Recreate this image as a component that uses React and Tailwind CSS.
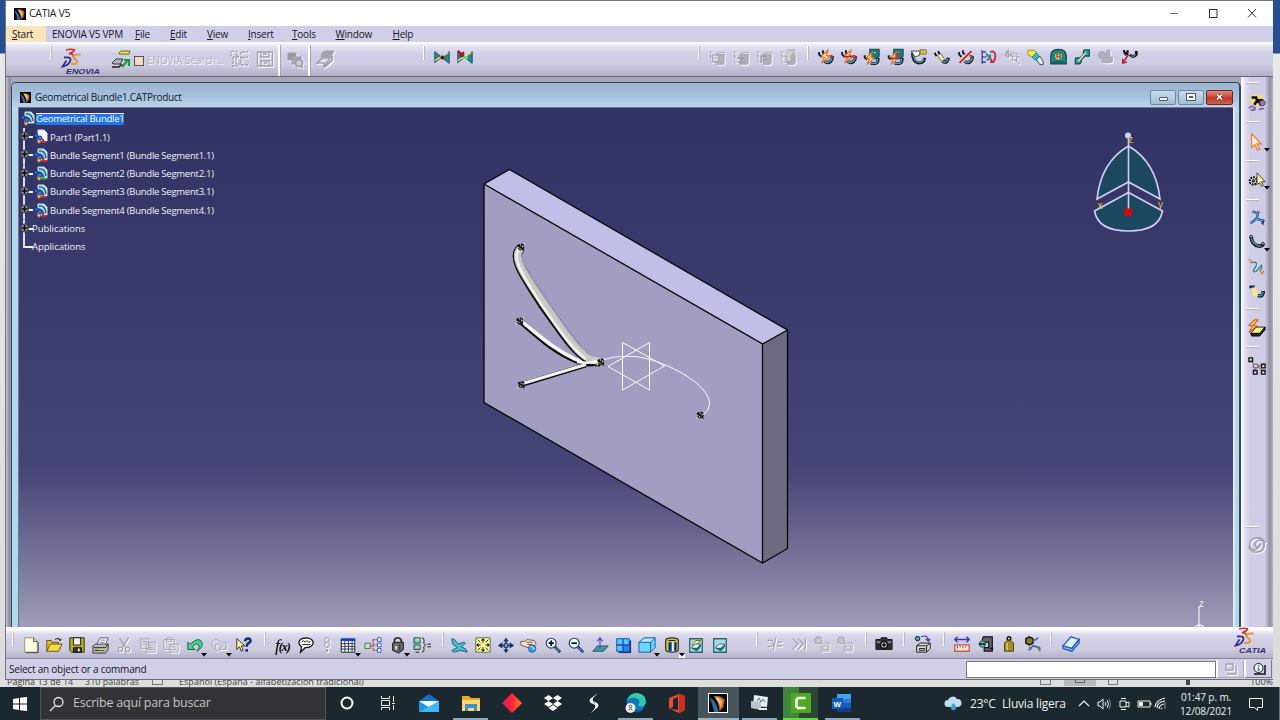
import React from 'react';

/* ---------- helpers ---------- */

const Icon = ({ w = 20, h = 20, off, children }) => (
  <svg
    width={w}
    height={h}
    viewBox={`0 0 ${w} ${h}`}
    fill="none"
    stroke={off ? '#a09faf' : '#111'}
    className={off ? 'shrink-0 drop-shadow-[1px_1px_0_#fff]' : 'shrink-0'}
  >
    {children}
  </svg>
);

const Cell = ({ className = 'w-[23.4px]', children }) => (
  <div className={`flex h-6 shrink-0 items-center justify-center ${className}`}>{children}</div>
);

const Grip = ({ className = '' }) => (
  <div className={`h-[14px] w-[2px] shrink-0 border-r border-[#b9b8c8] bg-[#fafaff] ${className}`} />
);

const Arrow = () => (
  <svg width="6" height="4" viewBox="0 0 6 4" className="absolute bottom-0 right-0">
    <path d="M0 0h6L3 3.5z" fill="#000" />
  </svg>
);

const AppLogo = ({ size = 12 }) => (
  <svg width={size} height={size} viewBox="0 0 12 12" className="shrink-0">
    <rect width="12" height="12" fill="#06080f" />
    <path d="M.5 2.500Q4 3 6.500 12H3.500Q2 6 .5 2.500" fill="#2b6fa3" />
    <path d="M3 1.500Q8 .500 10.500 4L9.500 9 7 11.500Q6.500 5 3 1.500" fill="#b9602a" />
    <path d="M4 2Q8 2 9 5L8 9.500Q6.500 5 4 2" fill="#f3a95c" />
    <path d="M4.500 2.500Q7.500 3.500 7.500 7Q6.500 4.500 4.500 2.500" fill="#fff6dc" />
  </svg>
);

const Solutions = ({ label }) => (
  <svg width="42" height="27" viewBox="0 0 42 27" fill="none" className="shrink-0">
    <path d="M5 2Q10 .500 13.500 1.800Q13 4 8 5.800Q13 5.500 12 9" stroke="#cc2a35" strokeWidth="1.600" />
    <path d="M3 9.500Q10 8.500 9.500 12Q8 17.500 1.500 18.500L5.500 12.500" stroke="#342c85" strokeWidth="1.800" />
    <path d="M19.500 6.500Q13 6 12.500 8.500Q12.500 10.500 15 11.500Q17.500 13.500 14.500 16H10" stroke="#e59a32" strokeWidth="2" />
    <text x="5" y="25.500" fontSize="7.500" fontStyle="italic" fontWeight="700" fontFamily="Liberation Sans, sans-serif" fill="#342c70" textLength={label === 'CATIA' ? 27 : 34} lengthAdjust="spacingAndGlyphs">{label}</text>
  </svg>
);

/* ---------- harness icons ---------- */

const Strand = () => (
  <>
    <path d="M2.500 4v3l3 3M7 2v3l2 2" stroke="#1a1a22" strokeWidth="2.200" />
    <path d="M9 15q4 3 7 0 2-2 2-6" stroke="#15151c" strokeWidth="4" />
    <path d="M9 15q4 2.500 6.500 0 2-2 2-4" stroke="#4aa0c4" strokeWidth="2" />
    <path d="M17.500 12V8.500h-3" stroke="#c23a48" strokeWidth="1.600" />
  </>
);

const Bolt = () => <path d="M13 2L5 9l4 1.500L5.500 17 15 9.500 11 8z" fill="#ffe07a" stroke="#df6a2a" strokeWidth="1.300" />;

const BoltStrand = ({ mark }) => (
  <Icon>
    <Strand />
    <Bolt />
    {mark && <path d="M4 9.500h11" stroke="#c91f2d" strokeWidth="2" />}
  </Icon>
);

const BoltHook = ({ mark }) => (
  <Icon>
    <path d="M8 1h11v8l-4 3H8z" fill="#167f80" stroke="#0c4a4c" strokeWidth="1.200" />
    <circle cx="14" cy="5" r="2" fill="#8fc9c4" stroke="#0c4a4c" />
    <path d="M2 8v3l3 2" stroke="#1a1a22" strokeWidth="2.200" />
    <path d="M9 17q5 2 8-1l1-5" stroke="#15151c" strokeWidth="3.800" />
    <path d="M9 17q5 1.500 7.500-1l1-4" stroke="#4aa0c4" strokeWidth="1.800" />
    <path d="M11 4L4 11l3.500 1L4.500 19 13 11.500 9.500 10z" fill="#ffe07a" stroke="#df6a2a" strokeWidth="1.300" />
    {mark && <path d="M4 11.500h10M12 6h4" stroke="#c91f2d" strokeWidth="2" />}
  </Icon>
);

const Flag = ({ red }) => (
  <Icon>
    <path d="M2 3l16 13V3L2 15z" fill="#28898a" stroke="#124e58" />
    <path d="M2 13L17 4" stroke="#f0e35a" strokeWidth="1.600" />
    <circle cx="10.500" cy="9.500" r="2" fill={red ? '#28e05c' : '#111'} stroke={red ? '#bff5c8' : '#c33'} />
    {red && <path d="M2 2l6 5M8 3v4.500H4" stroke="#b01228" strokeWidth="2.400" />}
  </Icon>
);

const PartOff = ({ children }) => (
  <Icon off>
    <path d="M9 6h8v11H9z" fill="#b1b0bd" />
    <path d="M9 6l3-2h6v11l-1 2" />
    <path d="M3 3v12h5M2 3h4M3 8h3" strokeDasharray="2 1" />
    {children}
  </Icon>
);

const Curve = () => (
  <Icon>
    <path d="M3.500 4Q4 13 12 14.500Q16 15 17 12" stroke="#15151c" strokeWidth="4" />
    <path d="M3.500 5Q5 12 12 14.500H15" stroke="#4f9ea8" strokeWidth="1.500" />
    <circle cx="3.500" cy="4" r="1.500" fill="#a9bcc8" stroke="#15151c" />
    <circle cx="16.500" cy="12" r="1.500" fill="#a9bcc8" stroke="#15151c" />
  </Icon>
);

const Lamp = () => (
  <Icon>
    <path d="M3 4v3M6 4v2" stroke="#15151c" strokeWidth="2.600" />
    <path d="M4 7l4-1 4 8-1 2h-4Q4 12 4 7z" fill="#f7e48b" stroke="none" />
    <path d="M11 15q6 2 6-5" stroke="#15151c" strokeWidth="4" />
    <path d="M11 15q5 1.500 5.500-4" stroke="#4c8fb5" strokeWidth="1.800" />
  </Icon>
);

/* ---------- top area ---------- */

const TitleBar = () => (
  <div className="flex h-[25px] items-center bg-white pl-2">
    <AppLogo />
    <span className="ml-[3px] text-[10.500px] leading-none tracking-[-0.3px] text-[#222]">CATIA V5</span>
    <svg width="90" height="12" viewBox="0 0 90 12" fill="none" stroke="#333" className="ml-auto mr-[16px] -mt-[2px]">
      <path d="M3 6.500h8" stroke="#777" />
      <rect x="42.500" y="2.500" width="7.500" height="8" />
      <path d="M81 2l8 8.500M89 2l-8 8.500" />
    </svg>
  </div>
);

const MENU = [
  ['S', 'tart', 'w-[40px] pl-[6px] bg-[#fbe2b8]'],
  ['', 'ENOVIA V5 VPM', 'w-[89px] pl-[6px]'],
  ['F', 'ile', 'w-[35px]'],
  ['E', 'dit', 'w-[37px]'],
  ['V', 'iew', 'w-[41px]'],
  ['I', 'nsert', 'w-[44px]'],
  ['T', 'ools', 'w-[43.500px]'],
  ['W', 'indow', 'w-[57px]'],
  ['H', 'elp', 'w-[30px]'],
];

const MenuBar = () => (
  <div className="flex h-[16px] bg-[#d1cfe7] text-[10px] leading-[16px] tracking-[-0.22px] text-[#16162a]">
    {MENU.map(([key, rest, width]) => (
      <div key={rest} className={`shrink-0 whitespace-nowrap ${width}`}>
        <span className="underline underline-offset-1">{key}</span>
        {rest}
      </div>
    ))}
  </div>
);

const TopToolbar = () => (
  <div className="flex h-[35px] items-start border-b border-[#66657a] bg-[linear-gradient(#fff_0,#e6e5f2_4px,#d0cee6_12px,#cfcde4_22px,#b2b0c4_34px)]">
    <Grip className="ml-[44px] mt-[4px]" />
    <div className="ml-[9px] mt-[6px] flex"><Solutions label="ENOVIA" /></div>
    <div className="ml-[8px] mt-[6px] flex h-6 items-center">
      <Icon>
        <path d="M8 3l2-2h9l-1 3H8z" fill="#f5e83c" stroke="#6b6a20" />
        <path d="M1 13l4-4h7l-3 5H3z" fill="#b4b3bf" stroke="#333" />
        <path d="M1 17h7l3-3" stroke="#222" strokeWidth="1.600" />
        <path d="M11 17l6-7m-4 0h5v6" stroke="#199b35" strokeWidth="2.200" />
      </Icon>
      <div className="ml-[3px] mt-[2px] h-[10px] w-[10px] border border-[#555] bg-[#f5d9c8]" />
      <span className="ml-[3px] w-[77px] whitespace-nowrap text-[10px] tracking-[-0.08px] text-[#b3b1c1] [text-shadow:1px_1px_0_#fff]">ENOVIA Search...</span>
    </div>
    <div className="mt-[5px] flex">
      <Cell className="w-[29px]">
        <Icon off>
          <path d="M2 3l3-1 3 1v4l-3 1-3-1zM4 8v9h5M7 8h5v7H7zM13 3h6M13 9l6-1M12 16h7M12 3v6" strokeWidth="1.300" strokeDasharray="3 1" />
        </Icon>
      </Cell>
      <Cell className="w-[23px]">
        <Icon off>
          <path d="M2.500 3h15v14h-15zM6 3v5h8V3M6 17v-5h8v5M8 5h4M9 14h3" strokeWidth="1.300" />
        </Icon>
      </Cell>
    </div>
    <div className="ml-[2px] mt-[3px] h-[31px] w-[3px] border-r border-[#a5a4b5] bg-white" />
    <Cell className="mt-[6px] w-[27px]">
      <Icon off>
        <path d="M3 3h8v7H3z" fill="#9897a3" />
        <path d="M7 7h9v7H7z" fill="#a3a2ae" />
        <circle cx="14" cy="13" r="3.500" strokeWidth="2" fill="#cfcde4" />
        <path d="M16 16l2 2" strokeWidth="2" />
      </Icon>
    </Cell>
    <div className="mt-[3px] h-[31px] w-[3px] border-r border-[#a5a4b5] bg-white" />
    <Cell className="mt-[6px] w-[27px]">
      <Icon off>
        <path d="M7 3l3-2h9l-3 6H6z" fill="#a3a2ae" />
        <path d="M2 13l5-5h8l-6 9v-4z" fill="#dedde9" strokeWidth="1.600" />
        <path d="M10 17l7-7V6" strokeWidth="2" />
      </Icon>
    </Cell>
    <Grip className="ml-[85px] mt-[4px]" />
    <div className="ml-[5px] mt-[4px] flex [&_svg]:w-[18px]">
      <Cell><Flag /></Cell>
      <Cell><Flag red /></Cell>
    </div>
    <Grip className="ml-[221px] mt-[4px]" />
    <div className="ml-[6px] mt-[4px] flex [&_svg]:w-[18px]">
      <Cell><PartOff><path d="M5 7h7v7H5zM7 10h4" fill="#ddd" /></PartOff></Cell>
      <Cell><PartOff><path d="M6 10h6l-3 5h5" strokeWidth="2" /></PartOff></Cell>
      <Cell><PartOff><path d="M7 15V8h6m-4 4h5" strokeWidth="2" /></PartOff></Cell>
      <Cell><PartOff><path d="M9 1h9l-4 6v7H8V8H5" fill="#ccc" /></PartOff></Cell>
    </div>
    <Grip className="ml-[8px] mt-[4px]" />
    <div className="ml-[4px] mt-[3px] flex [&_svg]:w-[17px]">
      <Cell><BoltStrand /></Cell>
      <Cell><BoltStrand mark /></Cell>
      <Cell><BoltHook /></Cell>
      <Cell><BoltHook mark /></Cell>
      <Cell>
        <Icon>
          <path d="M3 5Q3 16 10 17 17 17 17 11" strokeWidth="3.600" stroke="#15151c" />
          <path d="M3.500 6Q4 15 10 16.500 15 16.500 16.500 12" stroke="#4c9fae" strokeWidth="1.400" />
          <path d="M1.500 3H12l-1 5-5 2z" fill="#f4f4f4" stroke="#333" />
          <path d="M12 1.500h7v5h-7z" fill="#f1df40" stroke="#605718" />
          <path d="M14.500 4h2" stroke="#605718" />
        </Icon>
      </Cell>
      <Cell>
        <Icon>
          <path d="M2 5l2 4M6 3l2 4" strokeWidth="2.200" />
          <path d="M5 8l4-2 5 7-3 3z" fill="#faf1ae" stroke="#665c30" />
          <path d="M11 15q6 3 7-4" strokeWidth="4" />
          <path d="M11 15q5 2.500 6.500-3" stroke="#5aa4c0" strokeWidth="1.700" />
        </Icon>
      </Cell>
      <Cell>
        <Icon>
          <Strand />
          <path d="M6 9l5 4" stroke="#f0dd92" strokeWidth="3" />
          <path d="M3 17L17 3" stroke="#c21d2e" strokeWidth="2" />
        </Icon>
      </Cell>
      <Cell>
        <Icon>
          <path d="M2.500 2v16M2 4h5M2 10h6M2 16h5" stroke="#29337b" strokeWidth="1.300" />
          <path d="M7 6l5 5m-4 3l4-3V7" stroke="#247f87" strokeWidth="2" />
          <path d="M12 4q6-2 6 5 0 6-5 7m0-4v4h4" stroke="#c62d35" strokeWidth="2.200" />
        </Icon>
      </Cell>
      <Cell>
        <Icon off>
          <path d="M3 4h5v5H3zM5 1v11M1 7h9M10 9h5v5h-5zM14 14l4 4M10 5l6 2M16 10h3" strokeWidth="1.700" strokeDasharray="2.500 1" />
        </Icon>
      </Cell>
      <Cell>
        <Icon>
          <path d="M1 2h7l4 3-5 6-6-4z" fill="#f8ea2f" stroke="#8a8a33" />
          <path d="M11 5l4 5-5 4-4-4z" fill="#30bad1" stroke="#1c7b98" />
          <path d="M11 13l4-4 4 6v4h-4z" fill="#dfe9f0" stroke="#113b45" />
        </Icon>
      </Cell>
      <Cell>
        <Icon>
          <path d="M1 18V9Q1 1 10 1t9 8v9z" fill="#149195" stroke="#0c4549" strokeWidth="1.500" />
          <circle cx="10" cy="9" r="5" fill="#c9ba86" stroke="#443c22" />
          <path d="M8 6h4v6M8 6v4h4" stroke="#514526" />
          <path d="M3 16h14" stroke="#0b4c4e" strokeWidth="1.500" />
        </Icon>
      </Cell>
      <Cell>
        <Icon>
          <path d="M6 14l8-8" stroke="#0d4f4e" strokeWidth="4" />
          <path d="M11 6V4q0-2.500 3-2.500h4V9h-4zM1.500 18v-6q0-1 3-1h4v4q0 3-3 3z" fill="#27a2a0" stroke="#0d4f4e" strokeWidth="1.400" />
          <path d="M5 15l9-10" stroke="#efe8a0" strokeWidth="1.800" />
        </Icon>
      </Cell>
      <Cell>
        <Icon off>
          <circle cx="6" cy="8" r="4.500" fill="#b1b0bc" />
          <path d="M12 2h3v8h3v6l-6 1q-7 0-7-3l5-2z" fill="#b1b0bc" />
        </Icon>
      </Cell>
      <Cell>
        <Icon>
          <path d="M3 2l3 6M8 2L7 8" strokeWidth="2.600" />
          <path d="M11 7q2 5 7 0V3" strokeWidth="3.200" />
          <path d="M12 8.500q3 2 5.500-2" stroke="#519fc2" strokeWidth="1.200" />
          <path d="M9 7l-7 10m0-5v5l5-1" stroke="#b52435" strokeWidth="1.800" />
        </Icon>
      </Cell>
    </div>
  </div>
);

/* ---------- document window ---------- */

const DocTitle = () => (
  <div className="flex h-[24px] shrink-0 items-center rounded-t-[5px] bg-[linear-gradient(#9bb5d0,#a5c0dc_50%,#bcd3e9)] pt-[4px] pl-[8px] pr-[6px]">
    <AppLogo size={11} />
    <span className="ml-[4px] text-[10px] leading-none tracking-[-0.3px] text-[#141a2b]">Geometrical Bundle1.CATProduct</span>
    <div className="ml-auto flex gap-[2px]">
      <div className="flex h-[15px] w-[26px] items-center justify-center rounded-[2px] border border-[#6d87a6] bg-[linear-gradient(#c9dbec,#a4bcd5)]">
        <div className="mt-[4px] h-[4px] w-[9px] rounded-[1px] border border-[#4d5a70] bg-white" />
      </div>
      <div className="flex h-[15px] w-[26px] items-center justify-center rounded-[2px] border border-[#6d87a6] bg-[linear-gradient(#c9dbec,#a4bcd5)]">
        <div className="h-[6px] w-[8px] border-2 border-white bg-[#4d5a70] outline-1 outline-[#4d5a70]" />
      </div>
      <div className="flex h-[15px] w-[27px] items-center justify-center rounded-[2px] border border-[#6e2328] bg-[linear-gradient(#e28b7c,#c23a2b_55%,#d0604c)]">
        <svg width="9" height="8" viewBox="0 0 9 8" fill="none">
          <path d="M2 1.500l5 5M7 1.500l-5 5" stroke="#6c3638" strokeWidth="3" />
          <path d="M2 1.500l5 5M7 1.500l-5 5" stroke="#fff" strokeWidth="1.700" />
        </svg>
      </div>
    </div>
  </div>
);

const NodeIcon = ({ kind }) => (
  <Icon w={16} h={16}>
    <path d="M5 1h6l3 3v8H5z" fill={kind === 'part' ? '#fff' : '#a5d8f0'} stroke="#ddd" />
    {kind !== 'part' && <path d="M6 3q6-1 7 7M5 6q4 0 6 5" stroke="#0d5978" strokeWidth="1.300" />}
    <circle cx="3" cy="6.500" r="2" fill="#2f66e0" stroke="#113585" />
    <circle cx="7" cy="9" r="2" fill="#4a7bea" stroke="#142f77" />
    <circle cx="6" cy="12.500" r="1.800" fill="#e6c68d" stroke="#765f3d" />
    {kind !== 'root' && <path d="M10 10v3h3.500" stroke={kind === 'green' ? '#21974a' : '#d12632'} strokeWidth="2" />}
  </Icon>
);

const Branch = ({ last, plus = true }) => (
  <svg width="14" height="18.500" viewBox="0 0 14 18.500" className="shrink-0" fill="none">
    <path d={last ? 'M5 0v9h9' : 'M5 0v18.500M5 9h9'} stroke="#f0f0f5" strokeWidth="1.800" />
    {plus && (
      <>
        <circle cx="5.500" cy="8" r="4" fill="#8a8a90" stroke="#38374b" />
        <path d="M2.500 8h6M5.500 5v6" stroke="#0b0b0b" strokeWidth="1.400" />
      </>
    )}
  </svg>
);

const NODES = [
  ['Part1 (Part1.1)', 'part'],
  ['Bundle Segment1 (Bundle Segment1.1)', 'seg'],
  ['Bundle Segment2 (Bundle Segment2.1)', 'green'],
  ['Bundle Segment3 (Bundle Segment3.1)', 'seg'],
  ['Bundle Segment4 (Bundle Segment4.1)', 'seg'],
];

const Tree = () => (
  <div className="pt-[2px] text-[9.500px] leading-none tracking-[-0.25px] text-[#f1f1f6]">
    <div className="flex h-[18.200px] items-center pl-[1px]">
      <NodeIcon kind="root" />
      <span className="border-t border-white bg-[#1e76e8] pb-[1px] text-white">Geometrical Bundle1</span>
    </div>
    {NODES.map(([label, kind]) => (
      <div key={label} className="flex h-[18.300px] items-center">
        <Branch />
        <NodeIcon kind={kind} />
        <span className="ml-[1px] whitespace-nowrap">{label}</span>
      </div>
    ))}
    <div className="flex h-[18.200px] items-center tracking-[-0.05px]">
      <Branch />
      <span className="-ml-[1px]">Publications</span>
    </div>
    <div className="flex h-[18.200px] items-center tracking-[-0.05px]">
      <Branch last plus={false} />
      <span className="-ml-[1px]">Applications</span>
    </div>
  </div>
);

const Knot = ({ x, y }) => (
  <g transform={`translate(${x} ${y})`}>
    <circle r="2.600" fill="#8c8b98" stroke="#111" strokeWidth="1.600" strokeDasharray="3 1" />
    <path d="M-3.500-2L3 3.500M2.500-2.500l-4 4" stroke="#111" strokeWidth="1.300" />
    <path d="M-1.500 1.500h1M1-1h1M3-3h1M-4 3h1" stroke="#fff" />
  </g>
);

// Plate, cables and compass share window coordinates
const Scene = () => (
  <svg width="1214" height="519" viewBox="19 108 1214 519" fill="none" className="absolute inset-0">
    <path d="M484 184L509.500 169.500 787.500 330 762.500 344z" fill="#c0bfe8" />
    <path d="M484 184L762.500 344V563L484 402.500z" fill="#a09fc2" />
    <path d="M762.500 344L787.500 330V548.500L762.500 563z" fill="#6b6b82" />
    <path d="M484 184L509.500 169.500 787.500 330V548.500L762.500 563 484 402.500zL762.500 344V563M762.500 344L787.500 330" stroke="#060608" strokeWidth="1.300" />

    <g stroke="#fafaff">
      <path d="M622.500 342.500V390L664.500 366zM649.500 342.500V390L608 366.500z" />
      <path d="M603 360C620 354 643 355 664 364.500C690 375 710 391 709.500 404Q708 413 702 415" />
    </g>

    <path d="M520 321C535 333 551 350 575 360Q587 366 601 362" stroke="#0a0a0a" strokeWidth="5.600" />
    <path d="M521 321C536 332 551 348 575 359Q587 364 601 361" stroke="#f4f4f2" strokeWidth="3.800" />
    <path d="M522 384.500L586 365" stroke="#0a0a0a" strokeWidth="4.600" />
    <path d="M522 383.800L586 364.500" stroke="#f1f1ed" strokeWidth="3.200" />
    <path d="M521 248C510 257 524 276 542 304C560 329 574 351 588 359Q592 362 600 362" stroke="#111" strokeWidth="9" />
    <path d="M521 248C511 257 525 276 543 303C561 328 575 351 588 358Q592 361 600 361" stroke="#c9c9c4" strokeWidth="7.500" />
    <path d="M519 249C511 258 524 277 541 304C559 330 573 350 586 359" stroke="#f0f0ec" strokeWidth="2.600" />
    <path d="M525 265Q532 277 548 301T582 347" stroke="#606068" strokeDasharray="1 1.500" />
    <path d="M577 362q12 2 21-1" stroke="#f8f8f4" strokeWidth="2.600" />
    <Knot x="521" y="247" />
    <Knot x="520" y="321" />
    <Knot x="521.500" y="384.500" />
    <Knot x="601" y="362" />
    <Knot x="700.500" y="415" />

    <g stroke="#d2cff5" strokeWidth="1.600" fill="#1b4760">
      <path d="M1128.500 146Q1101 162 1097 199L1128.500 182 1160 199Q1156 162 1128.500 146z" />
      <path d="M1128.500 192.500L1162.500 211Q1159 231 1128.500 231T1094.500 211z" />
      <path d="M1128.500 137V210" />
    </g>
    <circle cx="1128" cy="135.500" r="3" fill="#d2cff5" />
    <rect x="1124.500" y="208.500" width="7.500" height="7.500" fill="#d10910" />
    <g fill="#e0c52f" fontSize="10" fontFamily="Liberation Sans, sans-serif">
      <text x="1128" y="142.500">z</text>
      <text x="1097.500" y="209">x</text>
      <text x="1158" y="208">y</text>
    </g>
    <path d="M1199 627V606M1195 627q4-4 9 0" stroke="#f0f0f5" strokeWidth="1.200" />
    <text x="1199" y="607" fill="#f0f0f5" fontSize="10" fontFamily="Liberation Sans, sans-serif">z</text>
  </svg>
);

const DocWindow = () => (
  <div className="flex min-w-0 flex-1 flex-col bg-[linear-gradient(90deg,#c5c4d2_0,#858398_4px,#a6a4b5_5px)] pl-[5px] pt-[5px]">
    <div className="flex min-h-0 flex-1 flex-col rounded-t-[5px] border border-b-0 border-r-2 border-[#33485c] bg-[#b5d7ec]">
      <DocTitle />
      <div className="relative mx-[6px] min-h-0 flex-1 border-l border-t border-[#6a7a92] bg-[linear-gradient(#333265_0,#3b3a6c_35%,#454476_68%,#4c4a7b_72%,#7a789b_88%,#9f9db9_100%)] shadow-[2px_0_0_#e4eaf4]">
        <Scene />
        <Tree />
      </div>
    </div>
  </div>
);

/* ---------- right toolbar ---------- */

const HLine = ({ className = '' }) => (
  <div className={`ml-[5px] h-[2px] w-[13px] shrink-0 border-b border-[#b5b4c4] bg-white ${className}`} />
);

const SideCell = ({ className, arrow, children }) => (
  <div className={`flex shrink-0 items-center pl-[7px] ${className}`}>
    <div className="relative [&>svg]:w-[18px]">
      {children}
      {arrow && <div className="absolute bottom-0 -right-[4px] h-[4px] w-[6px]"><Arrow /></div>}
    </div>
  </div>
);

const SideToolbar = () => (
  <div className="flex w-[32px] shrink-0 flex-col bg-[linear-gradient(90deg,#fff_0,#e2e1f0_4px,#d0cee6_9px,#cfcde5_24px,#8f8da0_29px,#b5b4bd_32px)] pt-[5px]">
    <HLine />
    <SideCell className="h-[37px]">
      <Icon>
        <path d="M3 1h14v12H3z" fill="#f3d78b" stroke="none" />
        <path d="M4 4h5l1 3h7M11 6l-4 6m4-5l4 6" strokeWidth="2.800" />
        <circle cx="16" cy="10" r="3" fill="#9b78bb" stroke="#52356c" />
        <path d="M1 16q3-4 6-1t-4 3M12 17l6-1" stroke="#8964b1" strokeWidth="2" />
      </Icon>
    </SideCell>
    <HLine />
    <SideCell className="h-[37px]" arrow>
      <Icon><path d="M4 1v15l3.500-3 3 6 2.500-1-3-6h4.500z" fill="#fff1e4" stroke="#ef812c" strokeWidth="1.400" /></Icon>
    </SideCell>
    <HLine />
    <SideCell className="h-[35px]" arrow>
      <Icon>
        <circle cx="6" cy="11" r="4" strokeWidth="2.500" strokeDasharray="2 1" fill="#fff" />
        <circle cx="6" cy="11" r="1.500" fill="#667" />
        <path d="M10 2v13l3-2 2 4 2-1-2-4h4z" fill="#fff9a8" stroke="#333" />
      </Icon>
    </SideCell>
    <HLine className="mt-[2px]" />
    <SideCell className="mt-[5px] h-[24.300px]">
      <Icon>
        <path d="M5 3l6 2-1 5-7 6M9 11l8 2-1 4" stroke="#173b7f" strokeWidth="2.600" />
        <path d="M5 3l6 2-1 5-7 6M9 11l8 2" stroke="#4db6d2" strokeWidth="1.200" />
        <path d="M14 15l4 3M14 4l-4-2" stroke="#a7424c" />
      </Icon>
    </SideCell>
    <SideCell className="h-[24.300px]" arrow><Curve /></SideCell>
    <SideCell className="h-[24.300px]">
      <Icon>
        <path d="M4 5q7-2 5 4-6 8 0 6l6-7q1 4-2 6" stroke="#247b89" strokeWidth="1.300" />
        <path d="M1 1l3 3M3 6l1-3M13 14l5 4m-4 0l4-4" stroke="#cf7b28" strokeDasharray="2 1" strokeWidth="1.600" />
      </Icon>
    </SideCell>
    <SideCell className="h-[24.300px]"><Lamp /></SideCell>
    <HLine className="mt-[5px]" />
    <SideCell className="h-[36px]">
      <Icon>
        <path d="M7 1L1 7l4 1-4 7 9-7-4-1 5-6z" fill="#ffdf45" stroke="#df5727" strokeWidth="1.200" />
        <path d="M9 9h10l-6 7H3z" fill="#fdf982" stroke="#111" />
        <path d="M3 16h10l6-7v3l-6 7H4z" fill="#222" />
      </Icon>
    </SideCell>
    <HLine />
    <SideCell className="h-[36px]">
      <Icon>
        <path d="M4 5l5 5h7M9 10l-2 6m4-6l4 5" stroke="#8e3b59" />
        <path d="M1 1h4v4H1zM15 8h4v4h-4zM6 15h4v4H6zM15 15h4v4h-4z" fill="#ddd" strokeWidth="1.500" />
        <path d="M6 8h5v4H6z" fill="#f5db77" stroke="#583e96" />
      </Icon>
    </SideCell>
    <HLine className="mt-[142px]" />
    <SideCell className="h-[34px]">
      <Icon off>
        <path d="M3 15Q0 6 6 3q8-3 12 3-8-4-10 3 0 4 3 4 3-1 2-4M17 5q3 9-3 12-8 3-12-3 8 4 10-3" strokeWidth="1.900" />
      </Icon>
    </SideCell>
  </div>
);

/* ---------- bottom toolbar ---------- */

const Lens = ({ plus }) => (
  <Icon>
    <path d="M12 12l6 6" stroke="#1e3c75" strokeWidth="3" />
    <path d="M13 13l4 4" stroke="#62b9df" />
    <circle cx="8" cy="8" r="5.500" fill="#edfbff" stroke="#244068" strokeWidth="1.300" />
    <path d={plus ? 'M5 8h6M8 5v6' : 'M5 8h6'} strokeWidth="2" />
  </Icon>
);

const ViewBox = ({ full }) => (
  <Icon>
    <path d="M3 3h14v15H3z" fill="#9bddeb" stroke="#45606b" strokeWidth="1.500" />
    {full && <path d="M6 9l4-4h5l-4 5H6z" fill="#f7e77b" stroke="#665f2c" />}
    <path d="M5 13l4-4h6v3l-4 4z" fill="#fff" stroke="#22636b" />
    <path d="M5 13h6l4-4v3l-4 5-6-3" fill="#176b76" stroke="none" />
  </Icon>
);

const PasteOff = () => (
  <Icon off>
    <circle cx="6" cy="6" r="4" fill="#c3c2ce" strokeDasharray="2 1" strokeWidth="1.500" />
    <path d="M9 9h9v9H9zM11 12h5v4h-5z" fill="#e4e3ee" />
  </Icon>
);

const BottomToolbar = () => (
  <div className="flex h-[32px] shrink-0 items-start border-b border-[#8987a0] bg-[linear-gradient(#fff_0,#fff_2px,#dddcec_7px,#d0cee6_14px,#ceccdf_22px,#b5b3ca_31px)]">
    <Grip className="ml-[6px] mt-[5px]" />
    <div className="ml-[5px] mt-[6px] flex [&_svg]:max-w-[18px]">
      <Cell><Icon><path d="M3 2h10l4 4v12H3z" fill="#fffde2" stroke="#8d8c78" /><path d="M13 2v4h4M4 18.500h14V7" stroke="#393932" /></Icon></Cell>
      <Cell><Icon><path d="M2 17V5h5l1 2h7v3" fill="#e7b72a" stroke="#5c4a13" /><path d="M2 17l4-8h13l-4 8z" fill="#f8db43" stroke="#5c4a13" /><path d="M11 4q5-3 6 1m0 0l-2-1m2 1l1-2" /></Icon></Cell>
      <Cell><Icon><path d="M2 2h16v16H4l-2-2z" fill="#b6ad21" stroke="#222" /><path d="M6 2h8v8H6z" fill="#f2f2f2" /><path d="M6 13h9v5H6z" fill="#333" /><path d="M11 14h2v3h-2z" fill="#fff" stroke="none" /></Icon></Cell>
      <Cell><Icon><path d="M5 10l4-8h9l-3 8z" fill="#fff" stroke="#555" /><path d="M1 11l3-2h14v6l-3 4H1z" fill="#bbbac4" stroke="#333" /><path d="M2 13h13l3-4M3 16h11" /><path d="M7 15h8" stroke="#e5d931" strokeWidth="1.600" /><path d="M10 4.500h5M9 7h5" stroke="#4973bc" /></Icon></Cell>
      <Cell><Icon off><path d="M5 2l7 11M15 2L8 13" strokeWidth="1.600" /><circle cx="6" cy="15" r="2.500" strokeWidth="1.300" /><circle cx="14" cy="15" r="2.500" strokeWidth="1.300" /></Icon></Cell>
      <Cell><Icon off><path d="M2 3h9v11H2zM8 7h10v11H8z" fill="#dddcea" /><path d="M4 6h4M4 9h3M10 10h6M10 13h6M10 15h6" /></Icon></Cell>
      <Cell><Icon off><path d="M2 4h12v11H2zM5 2h6v4H5z" /><path d="M9 9h9v9H9zM11 12h4M11 15h5" fill="#dddcea" /></Icon></Cell>
      <Cell className="relative w-[24px]"><Icon><path d="M2 7v8h8l-3-3q4-5 7-2 2 3-2 7 7-4 6-10-4-7-13 2z" fill="#48d58d" stroke="#165b44" /></Icon><Arrow /></Cell>
      <Cell className="relative w-[25px]"><Icon off><path d="M18 7v8h-8l3-3q-4-5-7-2-2 3 2 7-7-4-6-10 4-7 13 2z" /></Icon><Arrow /></Cell>
      <Cell className="w-[25px]"><Icon><path d="M2 3v12l3-3 2 5 2-1-2-5h4z" fill="#fffa9c" stroke="#222" /><path d="M11 6q1-4 5-3 3 3-1 5-2 1-2 4m0 2.500v3" stroke="#102f75" strokeWidth="2.800" /></Icon></Cell>
    </div>
    <Grip className="ml-[7px] mt-[5px]" />
    <div className="ml-[5px] mt-[6px] flex [&_svg]:max-w-[18px]">
      <Cell>
        <span className="whitespace-nowrap font-['Liberation_Serif',serif] text-[17px] italic leading-none tracking-[-1px] text-black">f<span className="text-[12px] font-bold">(x)</span></span>
      </Cell>
      <Cell><Icon><path d="M2 7q1-5 9-5 7 1 7 6-1 5-9 5l-5 5 1-6q-3-2-3-5z" fill="#fff" strokeWidth="1.400" /><path d="M5 7l2-2 2 2 2-2 2 2 2-1M6 9.500h9" /></Icon></Cell>
      <Cell className="w-[18px]"><Icon w={16} off><circle cx="8" cy="5" r="2.500" /><circle cx="8" cy="10" r="2.500" /><path d="M8 14v3" strokeWidth="2" /></Icon></Cell>
      <Cell className="relative w-[25px]"><Icon><path d="M2.500 4h15v14h-15z" fill="#fff" /><path d="M2 8.500h15M2 11.500h15M2 14.500h15M6.500 4v14M10.500 4v14M14.500 4v14" stroke="#1d2c55" /><path d="M2 4h16" stroke="#123dcc" strokeWidth="3" /></Icon><Arrow /></Cell>
      <Cell className="w-[25px]"><Icon><path d="M1 8h6v6H1z" fill="#e8d87b" stroke="#1c7991" /><path d="M7 11h3M10 4v12M10 4h4M10 10h4M10 16h4" stroke="#b44356" strokeDasharray="2 1" strokeWidth="1.500" /><path d="M15 2h4v4h-4zM15 8h4v4h-4zM15 14h4v4h-4z" fill="#fff" stroke="#2451cb" /></Icon></Cell>
      <Cell className="relative w-[24px]"><Icon><path d="M6 9V5q0-3 4-3t4 6" stroke="#333" strokeWidth="2" /><path d="M4 8l3-1h9v8l-5 4-7-3z" fill="#6b6b70" /><path d="M8 11v4" stroke="#e8e6d8" strokeWidth="2" /><path d="M12 9v8" stroke="#3b3b40" strokeWidth="1.500" /></Icon><Arrow /></Cell>
      <Cell className="w-[25px]"><Icon><path d="M1 2h7v6H1zM1 10h7v5H1z" fill="#72c6c1" stroke="#254d57" /><path d="M3 4h4M3 12h4" stroke="#e8dc6a" strokeWidth="2" /><path d="M10 2q3 0 2 6l2 2-2 2q1 6-2 6M16 9h4M16 12h4M3 18h4" /></Icon></Cell>
    </div>
    <Grip className="ml-[7px] mt-[5px]" />
    <div className="ml-[4px] mt-[6px] flex [&_svg]:max-w-[18px]">
      <Cell><Icon><path d="M2 3l3 1 4 5 6-2 2 1-4 4 5 3 1 3-7-2-8 2-2-2 6-3-5-4z" fill="#45bdd4" stroke="#17537c" /></Icon></Cell>
      <Cell><Icon><path d="M2 2h16v16H2z" fill="#fdfd91" stroke="#506450" /><path d="M7.500 5L10 2.500 12.500 5zM7.500 15l2.500 2.500L12.500 15zM5 7.500L2.500 10 5 12.500zM15 7.500l2.500 2.500-2.500 2.500z" fill="#111" stroke="none" /><path d="M10 4v3.500M10 12.500V16M4 10h3.500M12.500 10H16M4 4l3 3M16 4l-3 3M4 16l3-3M16 16l-3-3" /></Icon></Cell>
      <Cell><Icon><path d="M10 3v15M2.500 10.500h15" stroke="#142e66" strokeWidth="1.600" /><path d="M7 6l3-4 3 4zM7 15l3 4 3-4zM6 7l-5 3.500L6 14zM14 7l5 3.500-5 3.500z" fill="#142e66" stroke="none" /><rect x="8" y="8.500" width="4" height="4" fill="#58bce8" stroke="#142e66" /></Icon></Cell>
      <Cell><Icon><path d="M1 6h4l3-2 8 1 2 4-3 3-6 1-8-3z" fill="#fce4cd" stroke="#6c473b" /><path d="M7 7h7M8 9.500h6" stroke="#6c473b" /><circle cx="13.500" cy="14" r="4" fill="#3b9fe4" stroke="#1c4f95" /><path d="M11 12q4-1 5 3" stroke="#fff" /></Icon></Cell>
      <Cell><Lens plus /></Cell>
      <Cell><Lens /></Cell>
      <Cell><Icon><path d="M2 17l5-6h12l-5 6z" fill="#369ba1" stroke="#23545a" /><path d="M10 14V3M7 6l3-4 3 4" stroke="#514dc3" strokeWidth="1.300" /></Icon></Cell>
      <Cell><Icon><path d="M5 5h14v14H5z" fill="#183773" stroke="none" /><path d="M3 3h14v14H3z" fill="#56c6fb" stroke="#144ac0" /><path d="M10 10h7v7h-7z" fill="#3182de" stroke="none" /><path d="M3 10h14M10 3v14" stroke="#144ac0" strokeWidth="1.500" /></Icon></Cell>
      <Cell className="relative w-[25px]"><Icon><path d="M1 7l6-5h12v11l-5 5H1z" fill="#6bd5ff" stroke="#184f9c" /><path d="M2 7l5-4h11l-4 4z" fill="#b3eeff" stroke="none" /><path d="M1 7h13v11M14 7l5-5" stroke="#184f9c" /></Icon><Arrow /></Cell>
      <Cell className="relative w-[25px]"><Icon><path d="M3 5q0-3 7-3t7 3v10q0 3-7 3t-7-3z" fill="#d4c943" stroke="#333" strokeWidth="1.400" /><path d="M6 7h8v10H6z" fill="#2d79c8" stroke="none" /><path d="M11 7v10" stroke="#fff" strokeWidth="2" /><path d="M7.500 7v10M14 7v9" stroke="#10294d" strokeWidth="2" /><path d="M6 5h8" /></Icon><div className="absolute -bottom-[1px] right-0 h-[5px] w-[6px] bg-white" /><Arrow /></Cell>
      <Cell><ViewBox full /></Cell>
      <Cell><ViewBox /></Cell>
    </div>
    <Grip className="ml-[25px] mt-[5px]" />
    <div className="ml-[5px] mt-[5px] flex [&_svg]:max-w-[18px]">
      <Cell><Icon off><path d="M2 6h5l2 8m2-11L8 17M13 8h5M12 12h6M2 13h5" strokeWidth="1.300" /></Icon></Cell>
      <Cell><Icon off><path d="M3 4l6 6-6 6M9 4l6 6-6 6M17 3v14" strokeWidth="1.300" /></Icon></Cell>
      <Cell><PasteOff /></Cell>
      <Cell><PasteOff /></Cell>
    </div>
    <Grip className="ml-[8px] mt-[5px]" />
    <div className="ml-[5px] mt-[5px] flex [&_svg]:max-w-[18px]">
      <Cell><Icon><path d="M1 5h5l1-2h6l1 2h5v11H1z" fill="#303037" /><path d="M2 8h16" stroke="#a9a9b3" strokeWidth="1.500" /><circle cx="10" cy="11" r="4" fill="#ccc" stroke="#111" strokeWidth="2" /><circle cx="10" cy="11" r="1.500" fill="#222" /></Icon></Cell>
    </div>
    <Grip className="ml-[8px] mt-[5px]" />
    <div className="ml-[6px] mt-[5px] flex [&_svg]:max-w-[18px]">
      <Cell><Icon h={22}><path d="M3 13l4-3h11v6l-4 4H3z" fill="#ddd" /><path d="M3 13h11v7M14 13l4-3M6 16h6v2H6z" /><circle cx="4" cy="5" r="2.500" fill="#36abb7" /><path d="M8 3q7-3 8 4m-3-2l3 3 2-3" stroke="#383ba9" strokeWidth="1.300" /></Icon></Cell>
    </div>
    <Grip className="ml-[8px] mt-[5px]" />
    <div className="ml-[6px] mt-[5px] flex [&_svg]:max-w-[18px]">
      <Cell><Icon><path d="M2 5h16M5 2L2 5l3 3M15 2l3 3-3 3" stroke="#303ba8" strokeWidth="1.500" /><path d="M2 11h16v7H2z" fill="#fff2dc" stroke="#c15a4f" strokeWidth="1.500" /><path d="M5 12v3M8 12v2M11 12v3M14 12v2" stroke="#9d4034" /></Icon></Cell>
      <Cell><Icon><path d="M7 2h10v16H8v-4h5V8H6V5z" fill="#66666d" strokeWidth="1.300" /><circle cx="6" cy="10" r="3.500" fill="#67c5b8" stroke="#194745" /><path d="M2 10h7M14 15h4" strokeWidth="1.600" /></Icon></Cell>
      <Cell><Icon><circle cx="10" cy="4" r="2" strokeWidth="1.600" /><path d="M5 9l3-3h4l3 3v9H5z" fill="#a18d23" stroke="#40380e" /><path d="M8 9v8" stroke="#e1ce54" strokeWidth="1.600" /></Icon></Cell>
      <Cell><Icon><path d="M2 4l4-2 4 2v5l-4 2-4-2z" fill="#8b7a24" strokeWidth="1.500" /><path d="M10 7l6-4M5 17l5-5 7 2 1 3" stroke="#347ca8" strokeWidth="2" /><path d="M5 13l4 3m5-3l4 6" stroke="#a64858" /></Icon></Cell>
    </div>
    <Grip className="ml-[6px] mt-[5px]" />
    <div className="ml-[7px] mt-[5px] flex [&_svg]:max-w-[18px]">
      <Cell><Icon><path d="M1 12L10 2l9 3-8 10z" fill="#d9f1ff" stroke="#2658ba" strokeWidth="1.400" /><path d="M1 12l10 3 8-10v4l-8 9-10-3z" fill="#8bcaf1" stroke="#2658ba" strokeWidth="1.400" /></Icon></Cell>
    </div>
    <div className="ml-auto mr-[-3px] flex"><Solutions label="CATIA" /></div>
  </div>
);

const StatusBar = () => (
  <div className="flex h-[21px] shrink-0 items-center border-b border-[#6d6b80] bg-[#d1cfe7] pl-[3px]">
    <span className="text-[10px] leading-none tracking-[-0.22px] text-[#151526]">Select an object or a command</span>
    <div className="ml-auto h-[17px] w-[250px] border border-[#77768a] bg-white" />
    <div className="flex h-[18px] w-[28px] items-center justify-center border-b border-l-2 border-r border-b-[#aaa9ba] border-l-white border-r-[#aaa9ba]">
      <Icon w={14} h={14} off><path d="M2 2h7v6H2zM12 4v8H3" strokeWidth="1.300" /></Icon>
    </div>
    <div className="mr-[1px] flex h-[18px] w-[28px] items-center justify-center border-b border-l-2 border-r border-b-[#77768a] border-l-white border-r-[#77768a]">
      <Icon w={14} h={14}><path d="M2 12h11V3" strokeWidth="1.500" /><circle cx="6.500" cy="6" r="4.500" fill="#fff" /><path d="M6.500 5.500V9M6.500 3v1.500" stroke="#1e9cc0" strokeWidth="2" /></Icon>
    </div>
  </div>
);

// Sliver of the Word status bar left visible under the window
const WordStrip = () => (
  <div className="flex h-[7px] items-end overflow-hidden bg-[#dedede] pl-[7px] pr-[7px] text-[9px] leading-[9px] text-[#444]">
    <div className="mb-[1px] flex h-[9px] w-full items-center whitespace-nowrap">
      <span className="w-[78px]">Página 13 de 14</span>
      <span className="w-[67px]">310 palabras</span>
      <div className="mr-[16px] h-[6px] w-[11px] border border-t-0 border-[#777]" />
      <span className="tracking-[0.03px]">Español (España - alfabetización tradicional)</span>
      <div className="ml-auto mr-[13px] h-[6px] w-[11px] border border-[#777]" />
      <div className="flex h-full w-[32px] justify-center bg-[#b9b9b9]">
        <div className="h-[6px] w-[10px] border border-[#666]" />
      </div>
      <div className="ml-[12px] h-[6px] w-[10px] border border-[#777]" />
      <div className="ml-[68px] h-[6px] w-[4px] bg-[#444]" />
      <span className="ml-[60px]">100%</span>
    </div>
  </div>
);

/* ---------- taskbar ---------- */

const Task = ({ className = '', bar, children }) => (
  <div className="flex h-full w-[41.300px] shrink-0 items-center justify-center">
    <div className={`flex h-full w-[35px] items-center justify-center border-b-2 ${bar || 'border-transparent'} ${className}`}>
      {children}
    </div>
  </div>
);

const Taskbar = () => (
  <div className="flex h-[33px] shrink-0 items-center bg-[#1b282f] text-[#f0f0f0]">
    <div className="flex w-[40px] justify-center">
      <svg width="16" height="16" viewBox="0 0 16 16" fill="#fff">
        <path d="M1 3l6-1v5.500H1zM8 1.800L15 1v6.500H8zM1 8.500h6V14l-6-1zM8 8.500h7V15l-7-.8z" />
      </svg>
    </div>
    <div className="flex h-full w-[286px] items-center border border-[#50565a] bg-[#313334] pl-[8px] text-[#c5c5c5]">
      <svg width="16" height="16" viewBox="0 0 16 16" fill="none" stroke="#e5e5e5" strokeWidth="1.300">
        <circle cx="9.500" cy="6" r="4.500" />
        <path d="M6.500 9.500L1 15" />
      </svg>
      <span className="ml-[8px] text-[12.500px] leading-none tracking-[-0.22px]">Escribe aquí para buscar</span>
    </div>
    <div className="flex h-full">
      <Task><svg width="14" height="14" viewBox="0 0 14 14" fill="none"><circle cx="7" cy="7" r="5.500" stroke="#fff" strokeWidth="2" /></svg></Task>
      <Task>
        <svg width="16" height="16" viewBox="0 0 16 16" fill="none" stroke="#eee"><path d="M1.500 1v2.500h8V1M1.500 5.500h8v5h-8zM1.500 15v-2.500h8V15M13.500 1v6M13.500 10v5M12 8.500h3" /></svg>
      </Task>
      <Task>
        <svg width="22" height="20" viewBox="0 0 22 20"><path d="M1 8L11 1l10 7v11H1z" fill="#0f6fc0" /><path d="M2 8h18v4l-9 5-9-5z" fill="#f5fbff" /><path d="M1 8l11 7-11 4z" fill="#1f93e0" /><path d="M21 8L1 19h20z" fill="#3cb9f5" /></svg>
      </Task>
      <Task bar="border-[#8ba6b9]">
        <svg width="20" height="18" viewBox="0 0 20 18"><path d="M1 2h7l2 2h9v12H1z" fill="#e8a930" /><path d="M1 6h18v11H1z" fill="#ffd669" /><path d="M4 17v-7h12v7h-3v-3H7v3z" fill="#3e92d1" /></svg>
      </Task>
      <Task>
        <svg width="20" height="20" viewBox="0 0 20 20">
          <defs><linearGradient id="dia"><stop stopColor="#d91568" /><stop offset=".5" stopColor="#ff2437" /><stop offset="1" stopColor="#ff7d1b" /></linearGradient></defs>
          <path d="M10 0l10 10-10 10L0 10z" fill="url(#dia)" />
        </svg>
      </Task>
      <Task>
        <svg width="20" height="18" viewBox="0 0 20 18" fill="#fff"><path d="M5.500 1l4.500 3-4.500 3L1 4zM14.500 1L19 4l-4.500 3L10 4zM5.500 7L10 10l-4.500 3L1 10zM14.500 7l4.500 3-4.500 3L10 10zM5.500 14L10 11l4.500 3-4.500 3z" /></svg>
      </Task>
      <Task>
        <svg width="14" height="20" viewBox="0 0 14 20" fill="#fff"><path d="M11 0L3 6q-1 3 1 4l4 2q-3-4-2-7zM4 20l7-6q1-3-1-4L6 8q3 4 2 7z" /></svg>
      </Task>
      <Task bar="border-[#8ba6b9]">
        <svg width="22" height="22" viewBox="0 0 22 22">
          <circle cx="11" cy="10.500" r="9.500" fill="#1278bd" />
          <path d="M2 8Q5 1 12 1q9 1 9 9 0 5-8 4 4-6-2-8-5-1-9 2" fill="#35c7ac" />
          <path d="M9 8q-4 4 0 8 3 3 9 2-7 5-12 0Q3 13 9 8" fill="#0c57a1" />
          <circle cx="5.500" cy="16" r="5" fill="#eee" />
          <circle cx="5.500" cy="14.500" r="1.300" fill="none" stroke="#555" /><path d="M3.500 18q2-2.500 4 0" fill="none" stroke="#555" />
        </svg>
      </Task>
      <Task>
        <svg width="18" height="20" viewBox="0 0 18 20"><path d="M1 5l10-4 6 2v14l-6 3-9-4 8 1V4L5 6v8l-4 2z" fill="#ee472b" /><path d="M11 1l6 2v14l-6 3z" fill="#c72f1e" /></svg>
      </Task>
      <div className="flex h-full w-[41.300px] items-center justify-center border-b-2 border-[#9bb1bf] bg-[#46545b]">
        <div className="border border-white"><AppLogo size={18} /></div>
      </div>
      <Task bar="border-[#8ba6b9]">
        <svg width="20" height="18" viewBox="0 0 20 18"><path d="M4 1l14 2-1 10-14-1z" fill="#e8eef1" /><path d="M1 7l10 1v8L1 14z" fill="#bac5ca" /><path d="M7 7l2-3 2 4 2-3 2 3" fill="none" stroke="#427ba2" /><path d="M9 14h8v2H9z" fill="#e8eef1" /></svg>
      </Task>
      <Task className="bg-[linear-gradient(90deg,#41843e_45%,#2c4538_45%)]" bar="border-[#62dc41]">
        <svg width="20" height="20" viewBox="0 0 20 20" fill="none"><rect width="20" height="20" rx="1" fill="#50a81d" /><path d="M14.500 5H7L5.500 6.500v7L7 15h7.500" stroke="#fff" strokeWidth="2.500" /></svg>
      </Task>
      <Task bar="border-[#8ba6b9]">
        <svg width="20" height="20" viewBox="0 0 20 20">
          <path d="M5 1h14v5H5z" fill="#41a5ee" /><path d="M5 6h14v4H5z" fill="#2b7cd3" /><path d="M5 10h14v5H5z" fill="#185abd" /><path d="M5 15h14v4H5z" fill="#103f91" />
          <rect y="5" width="11" height="11" fill="#185abd" />
          <text x="1.500" y="13.500" fontSize="8" fontWeight="700" fontFamily="Liberation Sans, sans-serif" fill="#fff">W</text>
        </svg>
      </Task>
    </div>
    <div className="ml-auto flex h-full items-center">
      <svg width="18" height="16" viewBox="0 0 18 16"><path d="M4 11a3.500 3.500 0 0 1 0-7 5 5 0 0 1 9-1 4 4 0 0 1 1 8z" fill="#c2dcf4" /><path d="M9.500 7q4 4 2 6.500-2 1.500-4 0-2-2.500 2-6.500" fill="#429edc" /></svg>
      <span className="ml-[8px] w-[32px] whitespace-nowrap text-[12px] tracking-[-0.2px]">23°C</span>
      <span className="w-[76px] whitespace-nowrap text-[12px] tracking-[-0.2px]">Lluvia ligera</span>
      <svg width="90" height="16" viewBox="0 0 90 16" fill="none" stroke="#f0f0f0" className="mr-[10px]">
        <path d="M1 10l5-5 5 5" strokeWidth="1.200" />
        <path d="M20 6h2l3-3v10l-3-3h-2zM27 6q2 2 0 4M29 4q3 4 0 8" /><path d="M31 3q3 5 0 10" stroke="#7c8589" />
        <path d="M42 5h6v6h-6zM48 7l3-1v5l-3-1M43 2.500h5M43 13.500h5" />
        <path d="M60 5h12v6H60zM72 7h1v2" /><path d="M61.500 6.500h3v3h-3z" fill="#fff" />
        <path d="M83 13l1-1M81 13q0-4 5-5M79 12q0-6 8-7M77 11q1-7 10-9" strokeWidth="1.200" /><path d="M87 6v7" stroke="#879297" />
      </svg>
      <div className="w-[56px] text-center text-[10px] leading-[14px] tracking-[-0.1px] whitespace-nowrap">
        <div>01:47 p. m.</div>
        <div>12/08/2021</div>
      </div>
      <svg width="16" height="16" viewBox="0 0 16 16" fill="none" stroke="#f0f0f0" className="ml-[14px] mr-[15px]">
        <path d="M1.500 2.500h13v9h-5v3l-3-3h-5z" />
      </svg>
      <div className="h-full border-r border-[#66737a]" />
    </div>
  </div>
);

export default function App() {
  return (
    <div className="flex h-[720px] w-[1280px] flex-col overflow-hidden font-['Open_Sans','Noto_Sans',sans-serif]">
      <div className="flex h-[680px] bg-[linear-gradient(#264f91_0,#264f91_53px,#e8e8e8_54px,#dcdcdc_100%)]">
        <div className="ml-[5px] flex w-[1268px] flex-col border-l border-t border-[#77767f]">
          <TitleBar />
          <MenuBar />
          <TopToolbar />
          <div className="flex min-h-0 flex-1">
            <DocWindow />
            <SideToolbar />
          </div>
          <BottomToolbar />
          <StatusBar />
        </div>
      </div>
      <WordStrip />
      <Taskbar />
    </div>
  );
}
